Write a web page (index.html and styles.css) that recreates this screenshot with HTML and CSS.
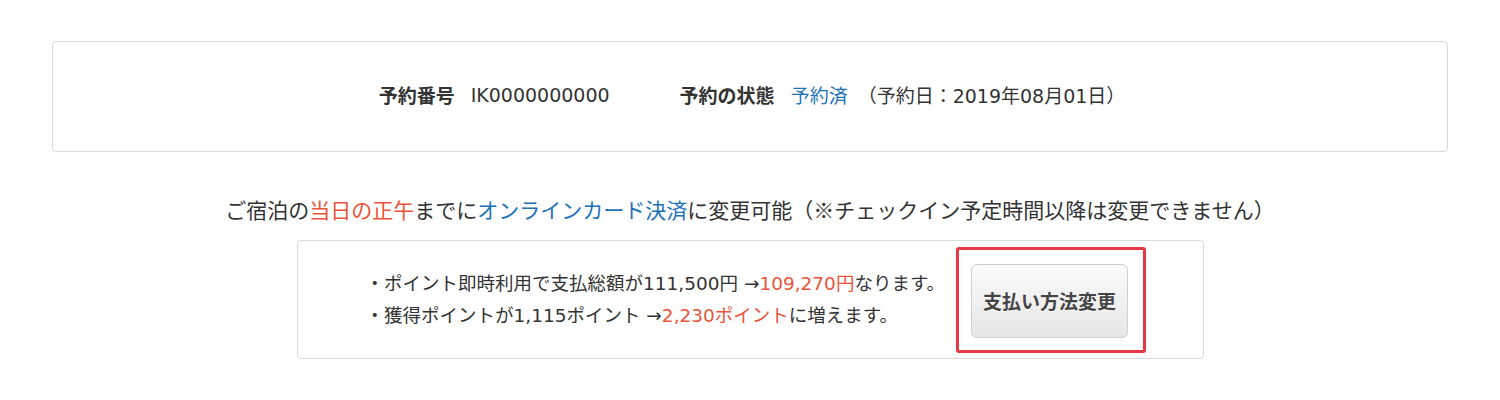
FILE: index.html
```html
<!DOCTYPE html>
<html lang="ja">
<head>
<meta charset="utf-8">
<link rel="stylesheet" href="styles.css">
</head>
<body>
<div class="page">
  <div class="status-box">
    <span class="label">予約番号</span><span class="value">IK0000000000</span>
    <span class="label label-gap">予約の状態</span><span class="value blue">予約済</span><span class="date">（予約日：2019年08月01日）</span>
  </div>
  <p class="notice">ご宿泊の<span class="red">当日の正午</span>までに<span class="blue">オンラインカード決済</span>に変更可能（※チェックイン予定時間以降は変更できません）</p>
  <div class="change-box">
    <div class="benefits">
      <p>・ポイント即時利用で支払総額が111,500円 →<span class="red">109,270円</span>なります。</p>
      <p>・獲得ポイントが1,115ポイント →<span class="red">2,230ポイント</span>に増えます。</p>
    </div>
    <div class="highlight">
      <button class="change-btn">支払い方法変更</button>
    </div>
  </div>
</div>
</body>
</html>
```
FILE: styles.css
```css
html, body {
  margin: 0;
  padding: 0;
  background: #fff;
}
body {
  font-family: "DejaVu Sans", "Noto Sans CJK JP", sans-serif;
  color: #333;
}
.page {
  padding: 41px 52px 0;
  display: flex;
  flex-direction: column;
  align-items: center;
}
.status-box {
  box-sizing: border-box;
  width: 1396px;
  height: 111px;
  border: 1px solid #d9d9d9;
  border-radius: 4px;
  display: flex;
  align-items: center;
  justify-content: center;
  font-size: 19px;
  padding-bottom: 4px;
  padding-left: 4px;
}
.label {
  font-family: "Noto Sans CJK JP", sans-serif;
  font-weight: bold;
  margin-right: 16px;
}
.label-gap {
  margin-left: 60px;
}
.value {
  margin-right: 10px;
}
.blue {
  color: #1d72b8;
}
.red {
  color: #e8553a;
}
.notice {
  margin: 42px 0 0;
  font-family: "Noto Sans CJK JP", sans-serif;
  font-size: 21px;
  line-height: 30px;
  text-align: center;
}
.change-box {
  box-sizing: border-box;
  margin-top: 16px;
  width: 907px;
  height: 119px;
  border: 1px solid #d9d9d9;
  border-radius: 4px;
  display: flex;
  align-items: center;
  padding-left: 68px;
}
.benefits {
  font-size: 18.5px;
  width: 590px;
}
.benefits p {
  margin: 0;
  line-height: 32px;
}
.highlight {
  box-sizing: border-box;
  width: 190px;
  height: 106px;
  border: 3px solid #e63946;
  border-radius: 3px;
  display: flex;
  align-items: center;
  justify-content: center;
  padding-top: 2px;
}
.change-btn {
  width: 157px;
  height: 74px;
  border: 1px solid #cfcfcf;
  border-radius: 6px;
  background: linear-gradient(#fbfbfb, #e6e6e6);
  font-family: "Noto Sans CJK JP", sans-serif;
  font-size: 19px;
  font-weight: bold;
  color: #444;
  text-shadow: 0 1px 0 #fff;
  padding: 0;
  margin-left: -2px;
}
```
